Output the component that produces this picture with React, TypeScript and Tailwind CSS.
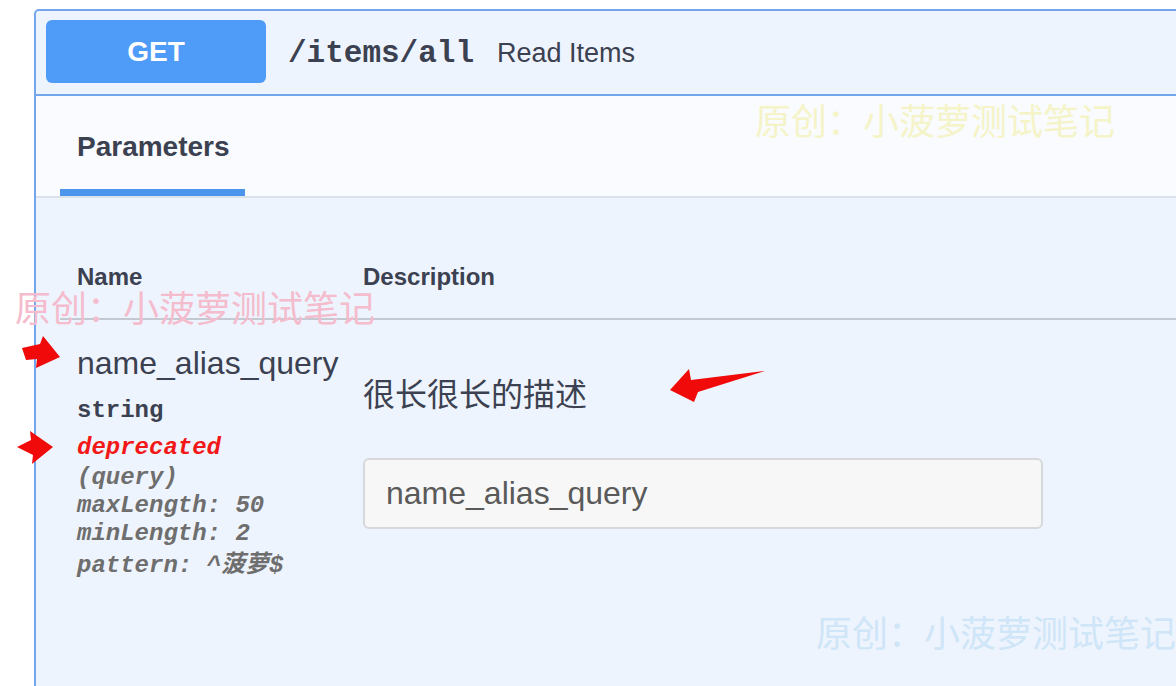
import React from "react";

const sans = "font-['Liberation_Sans','Noto_Sans_CJK_SC',sans-serif]";
const mono = "font-['Liberation_Mono','Noto_Sans_CJK_SC',monospace]";

function Watermark({ className }: { className: string }) {
  return (
    <div className={`absolute text-[36px] leading-[40px] whitespace-nowrap font-['Noto_Sans_CJK_SC',sans-serif] pointer-events-none ${className}`}>
      原创：小菠萝测试笔记
    </div>
  );
}

function Arrows() {
  return (
    <svg className="absolute left-0 top-0 pointer-events-none" width="1176" height="686" viewBox="0 0 1176 686">
      <polygon points="22,348 40,344 43,336 60,357 36,368 37,359 26,360" fill="#f00a0a" />
      <polygon points="17,447 31,440 30,431 53,447 32,464 33,455" fill="#f00a0a" />
      <polygon points="670,390 689,369 691,380 765,371 698,392 694,402" fill="#f00a0a" />
    </svg>
  );
}

export default function App() {
  return (
    <div className={`relative w-[1176px] h-[686px] overflow-hidden bg-white text-[#3b4151] ${sans}`}>
      <div className="ml-[34px] mt-[9px] w-[1180px] h-[700px] border-2 border-[#73a6ea] rounded-tl-[5px] bg-[#eef4fd]">
        {/* summary */}
        <div className="flex items-center pt-[9px] pb-[11px] pl-[10px] border-b-2 border-[#73a6ea]">
          <div className="w-[220px] h-[63px] rounded-[6px] bg-[#4f9bf8] flex items-center justify-center text-white font-bold text-[28px]">
            GET
          </div>
          <span className={`ml-[22px] mt-[6px] text-[31px] font-bold text-[#3b4151] ${mono}`}>/items/all</span>
          <span className="ml-[23px] mt-[4px] text-[27px] text-[#3b4151]">Read Items</span>
        </div>

        {/* tab header */}
        <div className="bg-[#f9fbfe] pl-[24px] border-b-2 border-[#dce2ea]">
          <div className="inline-flex flex-col">
            <div className="pt-[35px] px-[17px] text-[28px] leading-[32px] font-bold">Parameters</div>
            <div className="mt-[26px] h-[7px] w-[185px] bg-[#4d94ec]" />
          </div>
        </div>

        {/* table */}
        <div className="ml-[24px]">
          <div className="flex pt-[65px] pb-[27px] border-b-2 border-[#c3c8d1] text-[24px] leading-[28px] font-bold">
            <div className="w-[303px] pl-[17px]">Name</div>
            <div>Description</div>
          </div>
          <div className="flex pt-[25px]">
            <div className="w-[303px] pl-[17px]">
              <div className="text-[32px] leading-[36px]">name_alias_query</div>
              <div className={`mt-[16px] text-[24px] leading-[28px] font-bold ${mono}`}>string</div>
              <div className={`mt-[9px] text-[24px] leading-[28px] font-bold italic text-[#f21818] ${mono}`}>deprecated</div>
              <div className={`mt-[2px] text-[24px] leading-[28px] font-bold italic text-[#6e6e6e] ${mono}`}>(query)</div>
              <div className={`text-[24px] leading-[28px] font-bold italic text-[#6e6e6e] ${mono}`}>maxLength: 50</div>
              <div className={`text-[24px] leading-[28px] font-bold italic text-[#6e6e6e] ${mono}`}>minLength: 2</div>
              <div className={`mt-[4px] text-[24px] leading-[28px] font-bold italic text-[#6e6e6e] ${mono}`}>pattern: ^菠萝$</div>
            </div>
            <div>
              <div className="mt-[27px] text-[32px] leading-[40px] font-['Noto_Sans_CJK_SC',sans-serif]">很长很长的描述</div>
              <input
                placeholder="name_alias_query"
                className="mt-[46px] w-[680px] h-[71px] px-[21px] bg-[#f7f7f7] border-2 border-[#d6d8dc] rounded-[6px] text-[32px] outline-none placeholder:text-[#5a5a5a]"
              />
            </div>
          </div>
        </div>
      </div>

      <Watermark className="left-[755px] top-[99px] text-[#f5f4c8]" />
      <Watermark className="left-[15px] top-[286px] text-[#f4bccd]" />
      <Watermark className="left-[816px] top-[611px] text-[#cfe5f8]" />
      <Arrows />
    </div>
  );
}
